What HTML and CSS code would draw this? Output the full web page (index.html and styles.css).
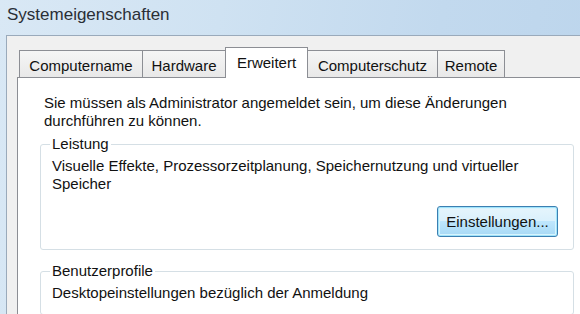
FILE: index.html
```html
<!DOCTYPE html>
<html lang="de">
<head>
<meta charset="utf-8">
<title>Systemeigenschaften</title>
<link rel="stylesheet" href="styles.css">
</head>
<body>
<div class="window">
  <div class="titlebar"><span class="title">Systemeigenschaften</span></div>
  <div class="frame">
    <div class="client">
      <div class="tabs">
        <div class="tab tab-name">Computername</div>
        <div class="tab tab-hw">Hardware</div>
        <div class="tab tab-adv active">Erweitert</div>
        <div class="tab tab-prot">Computerschutz</div>
        <div class="tab tab-remote">Remote</div>
      </div>
      <div class="panel">
        <p class="intro">Sie müssen als Administrator angemeldet sein, um diese Änderungen durchführen zu können.</p>
        <fieldset class="group">
          <legend class="group-title">Leistung</legend>
          <p class="group-text">Visuelle Effekte, Prozessorzeitplanung, Speichernutzung und virtueller Speicher</p>
          <div class="actions"><button class="btn" type="button">Einstellungen...</button></div>
        </fieldset>
        <fieldset class="group group-profiles">
          <legend class="group-title">Benutzerprofile</legend>
          <p class="group-text">Desktopeinstellungen bezüglich der Anmeldung</p>
        </fieldset>
      </div>
    </div>
  </div>
</div>
</body>
</html>
```

FILE: styles.css
```css
html, body {
  margin: 0;
  padding: 0;
}

body {
  width: 580px;
  height: 314px;
  overflow: hidden;
  font-family: "Liberation Sans", Arial, sans-serif;
  font-size: 15px;
  line-height: 18px;
  color: #111;
}

.window {
  width: 580px;
  height: 314px;
  overflow: hidden;
  display: flex;
  flex-direction: column;
  background: linear-gradient(100deg, #d9e8f5 0%, #cfe2f2 35%, #c2d9ee 70%, #bcd5ec 100%);
}

.titlebar {
  flex: none;
  height: 35px;
  box-sizing: border-box;
  padding: 5px 0 0 7px;
  font-size: 17px;
  line-height: 20px;
  color: #2a2f36;
}

.frame {
  flex: 1;
  display: flex;
  padding-left: 6px;
  min-height: 0;
}

.client {
  flex: 1;
  display: flex;
  flex-direction: column;
  background: #f0f0f0;
  border-top: 1px solid #9aaabb;
  border-left: 1px solid #9aaabb;
  padding: 11px 0 0 10px;
}

.tabs {
  flex: none;
  display: flex;
  align-items: flex-end;
  height: 30px;
  padding-left: 2px;
}

.tab {
  box-sizing: border-box;
  height: 27px;
  padding-top: 6px;
  margin-left: -1px;
  border: 1px solid #8c8e94;
  border-bottom: none;
  background: linear-gradient(#f5f5f5, #e8e8e8);
  text-align: center;
  white-space: nowrap;
}

.tab-name { width: 124px; margin-left: 0; }
.tab-hw { width: 84px; }
.tab-adv { width: 83px; }
.tab-prot { width: 131px; }
.tab-remote { width: 68px; }

.tab.active {
  position: relative;
  z-index: 1;
  height: 31px;
  margin-bottom: -1px;
  background: #fff;
}

.panel {
  flex: 1;
  width: 579px;
  min-height: 260px;
  box-sizing: border-box;
  border: 1px solid #8c8e94;
  background: #fff;
  padding: 16px 21px 0 22px;
}

.intro {
  margin: 0;
  padding-left: 4px;
}

.group {
  margin: 5px 0 0;
  padding: 4px 15px 12px 11px;
  border: 1px solid #d5dfe5;
  border-radius: 3px;
  min-width: 0;
}

.group-profiles {
  margin-top: 12px;
}

.group-title {
  padding: 0 2px;
  margin-left: -2px;
}

.group-text {
  margin: 0;
}

.actions {
  display: flex;
  justify-content: flex-end;
  margin-top: 13px;
}

.btn {
  width: 121px;
  height: 31px;
  box-sizing: border-box;
  padding: 0;
  border: 1px solid #3c7fb1;
  border-radius: 3px;
  background: linear-gradient(#e6f5fc 0%, #d9f0fc 50%, #bee6fd 50%, #a7d9f5 100%);
  box-shadow: inset 0 0 0 1px #9fe3fb, inset 0 0 0 2px #d8f4fd;
  font: inherit;
  color: #111;
}
```
